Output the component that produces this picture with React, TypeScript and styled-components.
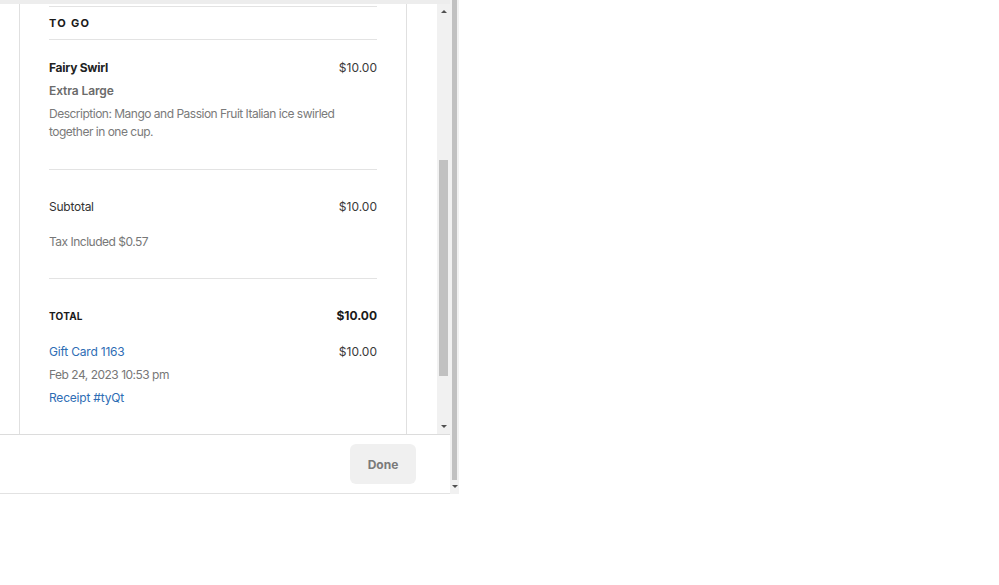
import React from 'react'
import styled, { createGlobalStyle } from 'styled-components'

const GlobalStyle = createGlobalStyle`
  body {
    margin: 0;
    background: #ffffff;
    font-family: Inter, 'Noto Sans', sans-serif;
  }
`

const Frame = styled.div`
  display: flex;
  width: 459px;
  height: 494px;
`

const Panel = styled.div`
  display: flex;
  flex-direction: column;
  width: 450px;
  border-bottom: 1px solid #e2e2e2;
`

const ScrollArea = styled.div`
  display: flex;
  height: 430px;
  border-top: 4px solid #ededed;
  border-bottom: 1px solid #dcdcdc;
`

const Content = styled.div`
  flex: 1;
  padding-left: 19px;
  overflow: hidden;
`

const Card = styled.div`
  width: 388px;
  height: 100%;
  border-left: 1px solid #e0e0e0;
  border-right: 1px solid #e0e0e0;
  padding: 2px 29px 0 29px;
  box-sizing: border-box;
`

const Section = styled.div<{ $pad?: string }>`
  border-top: 1px solid #e3e3e3;
  padding: ${(p) => p.$pad || '0'};
`

const SectionTitle = styled.div`
  font-size: 11px;
  font-weight: 700;
  letter-spacing: 1.3px;
  color: #1a1a1a;
  line-height: 32px;
`

const Row = styled.div<{ $gap?: number }>`
  display: flex;
  justify-content: space-between;
  align-items: center;
  line-height: 18px;
  margin-bottom: ${(p) => p.$gap ?? 5}px;
`

const ItemName = styled.span`
  font-size: 12px;
  font-weight: 700;
  letter-spacing: -0.25px;
  color: #222222;
`

const Price = styled.span<{ $bold?: boolean }>`
  font-size: 12px;
  font-weight: ${(p) => (p.$bold ? 700 : 400)};
  color: ${(p) => (p.$bold ? '#1a1a1a' : '#3a3a3a')};
`

const Variant = styled.div`
  font-size: 12px;
  font-weight: 600;
  letter-spacing: -0.1px;
  color: #6b6b6b;
  line-height: 18px;
  margin-bottom: 5px;
`

const Description = styled.div`
  font-size: 12px;
  letter-spacing: -0.5px;
  color: #7a7a7a;
  line-height: 18px;
`

const Label = styled.span`
  font-size: 12px;
  letter-spacing: -0.25px;
  color: #333333;
`

const Muted = styled.div<{ $gap?: number }>`
  font-size: 12px;
  letter-spacing: -0.5px;
  color: #777777;
  line-height: 18px;
  margin-bottom: ${(p) => p.$gap ?? 0}px;
`

const TotalLabel = styled.span`
  font-size: 10px;
  font-weight: 700;
  letter-spacing: 0.2px;
  color: #1a1a1a;
`

const Link = styled.a`
  font-size: 12px;
  letter-spacing: -0.2px;
  color: #2e6db4;
  text-decoration: none;
  line-height: 18px;
`

const LinkLine = styled.div`
  font-size: 12px;
  line-height: 18px;
`

const Track = styled.div<{ $width: number }>`
  position: relative;
  width: ${(p) => p.$width}px;
  background: #f1f1f1;
  flex-shrink: 0;
`

const Thumb = styled.div<{ $top: number; $bottom: number; $inset: number }>`
  position: absolute;
  left: ${(p) => p.$inset}px;
  right: ${(p) => p.$inset}px;
  top: ${(p) => p.$top}px;
  bottom: ${(p) => p.$bottom}px;
  background: #c1c1c1;
`

const Arrow = styled.div<{ $down?: boolean }>`
  position: absolute;
  left: 50%;
  transform: translateX(-50%);
  width: 0;
  height: 0;
  border-left: 3px solid transparent;
  border-right: 3px solid transparent;
  ${(p) =>
    p.$down
      ? 'bottom: 6px; border-top: 3px solid #505050;'
      : 'top: 6px; border-bottom: 3px solid #505050;'}
`

const Footer = styled.div`
  display: flex;
  justify-content: flex-end;
  align-items: center;
  height: 58px;
  padding-right: 34px;
`

const DoneButton = styled.button`
  width: 66px;
  height: 40px;
  border: none;
  border-radius: 6px;
  background: #f0f0f0;
  color: #7a7a7a;
  font-family: Inter, sans-serif;
  font-size: 12px;
  font-weight: 700;
`

export default function App() {
  return (
    <>
      <GlobalStyle />
      <Frame>
        <Panel>
          <ScrollArea>
            <Content>
              <Card>
                <Section>
                  <SectionTitle>TO GO</SectionTitle>
                </Section>
                <Section $pad="19px 0 28px">
                  <Row>
                    <ItemName>Fairy Swirl</ItemName>
                    <Price>$10.00</Price>
                  </Row>
                  <Variant>Extra Large</Variant>
                  <Description>
                    Description: Mango and Passion Fruit Italian ice swirled together in one cup.
                  </Description>
                </Section>
                <Section $pad="28px 0 27px">
                  <Row $gap={17}>
                    <Label>Subtotal</Label>
                    <Price>$10.00</Price>
                  </Row>
                  <Muted>Tax Included $0.57</Muted>
                </Section>
                <Section $pad="28px 0 0">
                  <Row $gap={18}>
                    <TotalLabel>TOTAL</TotalLabel>
                    <Price $bold>$10.00</Price>
                  </Row>
                  <Row>
                    <Link>Gift Card 1163</Link>
                    <Price>$10.00</Price>
                  </Row>
                  <Muted $gap={5}>Feb 24, 2023 10:53 pm</Muted>
                  <LinkLine>
                    <Link>Receipt #tyQt</Link>
                  </LinkLine>
                </Section>
              </Card>
            </Content>
            <Track $width={13}>
              <Arrow />
              <Thumb $top={156} $bottom={58} $inset={2} />
              <Arrow $down />
            </Track>
          </ScrollArea>
          <Footer>
            <DoneButton>Done</DoneButton>
          </Footer>
        </Panel>
        <Track $width={9}>
          <Thumb $top={0} $bottom={14} $inset={2} />
          <Arrow $down />
        </Track>
      </Frame>
    </>
  )
}
